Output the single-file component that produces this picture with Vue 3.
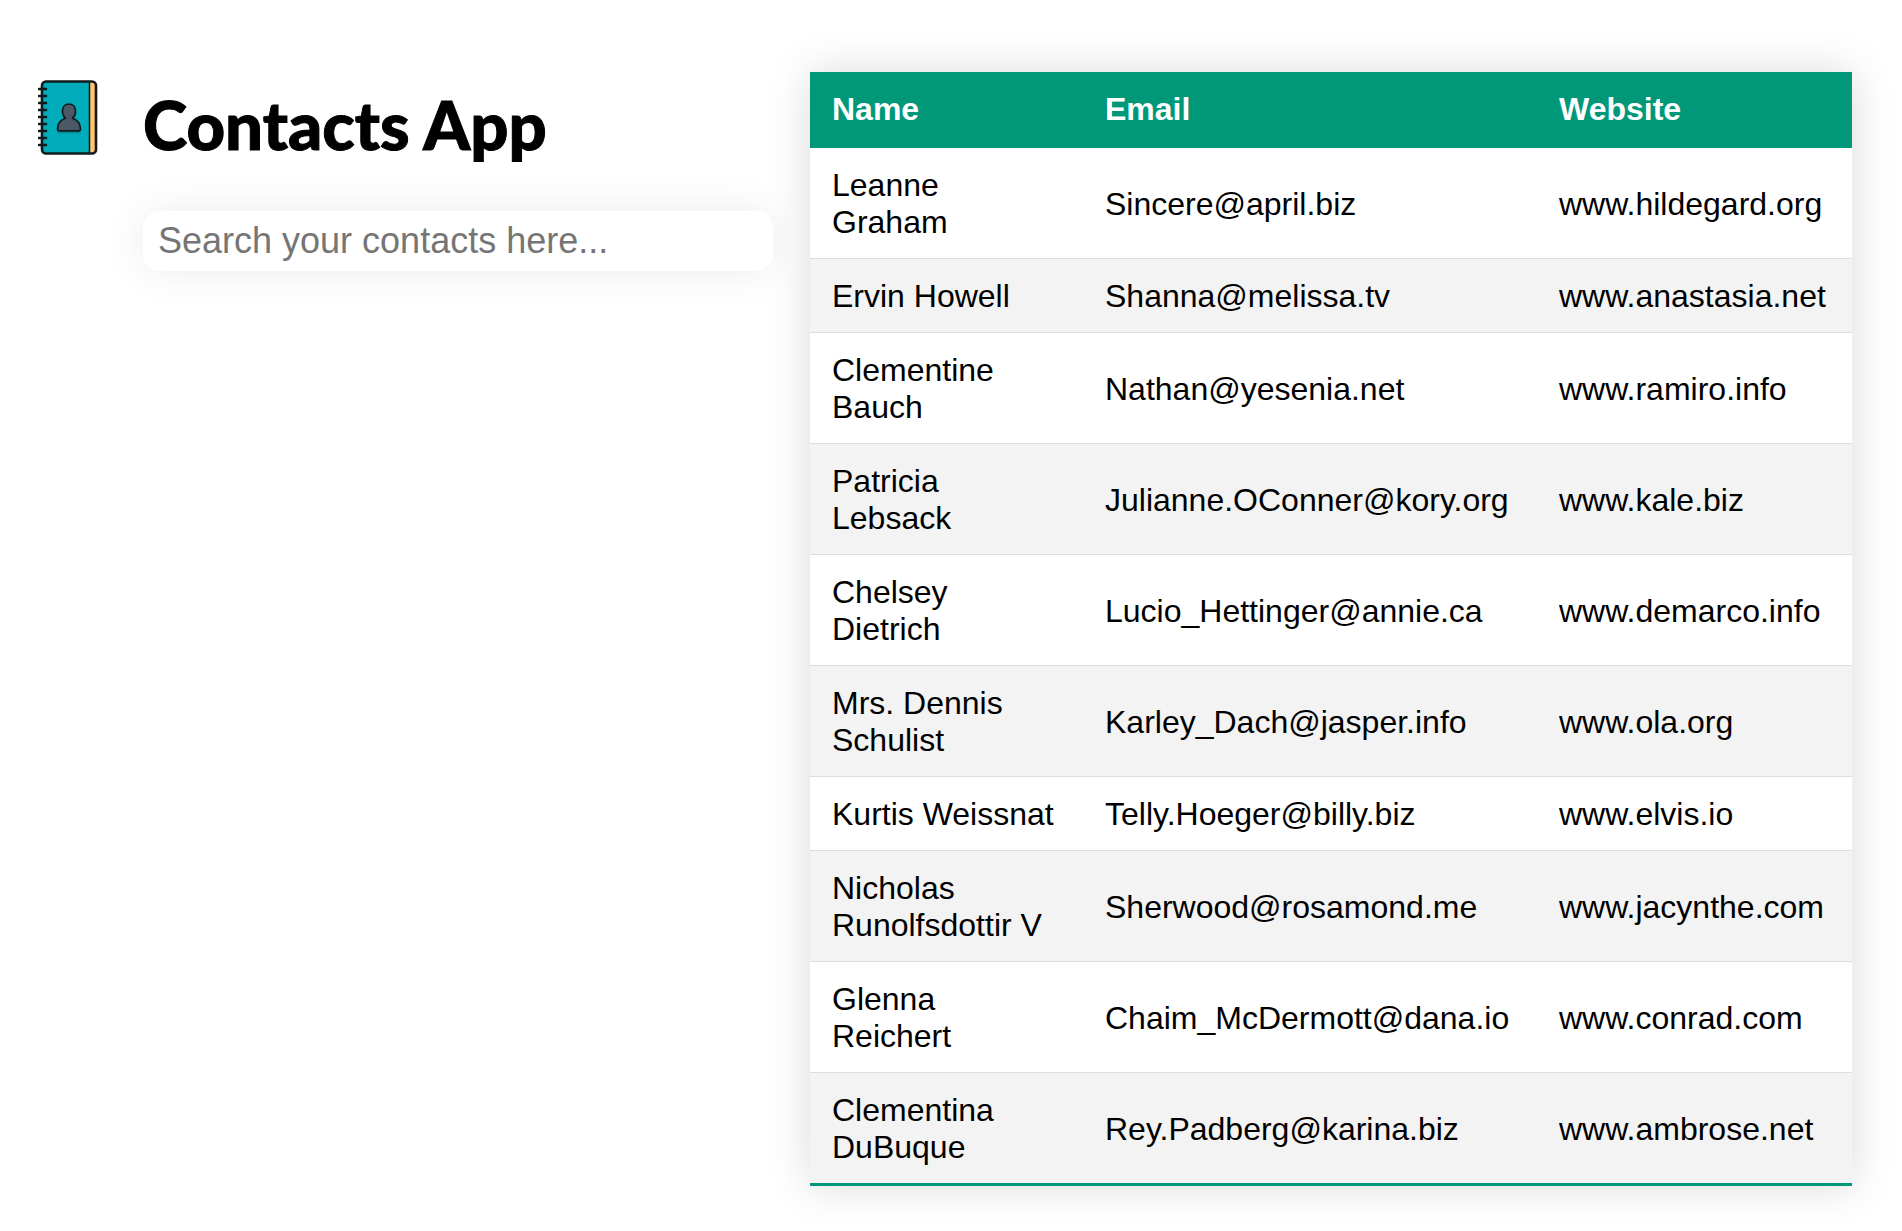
<script setup>
import { computed, ref } from 'vue'

const contacts = [
  { name: 'Leanne Graham', email: 'Sincere@april.biz', website: 'www.hildegard.org' },
  { name: 'Ervin Howell', email: 'Shanna@melissa.tv', website: 'www.anastasia.net' },
  { name: 'Clementine Bauch', email: 'Nathan@yesenia.net', website: 'www.ramiro.info' },
  { name: 'Patricia Lebsack', email: 'Julianne.OConner@kory.org', website: 'www.kale.biz' },
  { name: 'Chelsey Dietrich', email: 'Lucio_Hettinger@annie.ca', website: 'www.demarco.info' },
  { name: 'Mrs. Dennis Schulist', email: 'Karley_Dach@jasper.info', website: 'www.ola.org' },
  { name: 'Kurtis Weissnat', email: 'Telly.Hoeger@billy.biz', website: 'www.elvis.io' },
  { name: 'Nicholas Runolfsdottir V', email: 'Sherwood@rosamond.me', website: 'www.jacynthe.com' },
  { name: 'Glenna Reichert', email: 'Chaim_McDermott@dana.io', website: 'www.conrad.com' },
  { name: 'Clementina DuBuque', email: 'Rey.Padberg@karina.biz', website: 'www.ambrose.net' },
]

const query = ref('')
const visible = computed(() =>
  contacts.filter((c) => c.name.toLowerCase().includes(query.value.toLowerCase()))
)
const rings = [9, 16, 23, 30, 37, 44, 51, 58, 65]
</script>

<template>
  <main class="app">
    <svg class="logo" viewBox="0 0 60 76" aria-hidden="true">
      <rect x="4" y="1" width="54" height="73" rx="4" fill="#00acba" />
      <path d="M51 1h4a3 3 0 0 1 3 3v67a3 3 0 0 1-3 3h-4z" fill="#ffc66d" />
      <path d="M51.500 1v73" stroke="#111a1c" stroke-width="1.500" />
      <rect x="4" y="1.500" width="54" height="72" rx="4" fill="none" stroke="#111a1c" stroke-width="2.600" />
      <path
        v-for="y in rings"
        :key="y"
        :d="`M1 ${y}h7`"
        stroke="#111a1c"
        stroke-width="2.600"
        stroke-linecap="round"
      />
      <path d="M20 52.500h22" stroke="#008e9a" stroke-width="2" stroke-linecap="round" />
      <path
        d="M31 24c-4 0-6.500 3-6.500 7 0 3 1.200 5.800 3 7.200-4.600 1.500-7.800 5.300-8 11 0 1 .5 1.600 1.600 1.600h19.800c1.100 0 1.600-.6 1.600-1.600-.2-5.700-3.400-9.500-8-11 1.800-1.400 3-4.200 3-7.200 0-4-2.500-7-6.500-7z"
        fill="#4d5866"
        stroke="#111a1c"
        stroke-width="1.700"
        stroke-linejoin="round"
      />
    </svg>

    <section class="intro">
      <h1>Contacts App</h1>
      <input
        v-model="query"
        class="search"
        type="text"
        aria-label="Search your contacts"
        placeholder="Search your contacts here..."
      />
    </section>

    <table class="contacts">
      <thead>
        <tr>
          <th scope="col">Name</th>
          <th scope="col" class="email">Email</th>
          <th scope="col" class="website">Website</th>
        </tr>
      </thead>
      <tbody>
        <tr v-for="c in visible" :key="c.email">
          <td>{{ c.name }}</td>
          <td>{{ c.email }}</td>
          <td>{{ c.website }}</td>
        </tr>
      </tbody>
    </table>
  </main>
</template>

<style>
body {
  margin: 0;
  background: #fff;
}
</style>

<style scoped>
.app {
  display: grid;
  grid-template-columns: 60px minmax(0, 712fr) minmax(0, 1042fr);
  align-items: start;
  padding: 72px 50px 44px 38px;
  font-family: "Liberation Sans", Arial, sans-serif;
  color: #000;
}

.logo {
  width: 60px;
  height: 76px;
  margin-top: 8px;
}

.intro {
  display: flex;
  flex-direction: column;
  gap: 40px;
  margin: 6px 37px 0 45px;
}

h1 {
  margin: 0;
  font: 900 67px/93px Lato, sans-serif;
  white-space: nowrap;
  -webkit-text-stroke: 1px #000;
}

.search {
  box-sizing: border-box;
  width: 100%;
  height: 60px;
  padding: 0 15px;
  border: 0;
  border-radius: 16px;
  outline: none;
  background: #fff;
  box-shadow: 0 0 40px rgba(0, 0, 0, 0.08);
  font: 36px "Liberation Sans", Arial, sans-serif;
}

.search::placeholder {
  color: #757575;
}

.contacts {
  width: 100%;
  border-spacing: 0;
  box-shadow: 0 0 40px rgba(0, 0, 0, 0.15);
  font-size: 32px;
  line-height: 37px;
  text-align: left;
}

th {
  padding: 19px 22px 20px;
  background: #009879;
  color: #fff;
}

.email {
  width: 410px;
}

.website {
  width: 271px;
}

td {
  padding: 19px 22px 17px;
  border-bottom: 1px solid #ddd;
}

tbody tr:nth-child(even) {
  background: #f3f3f3;
}

tbody tr:last-child td {
  border-bottom: 3px solid #009879;
}
</style>
